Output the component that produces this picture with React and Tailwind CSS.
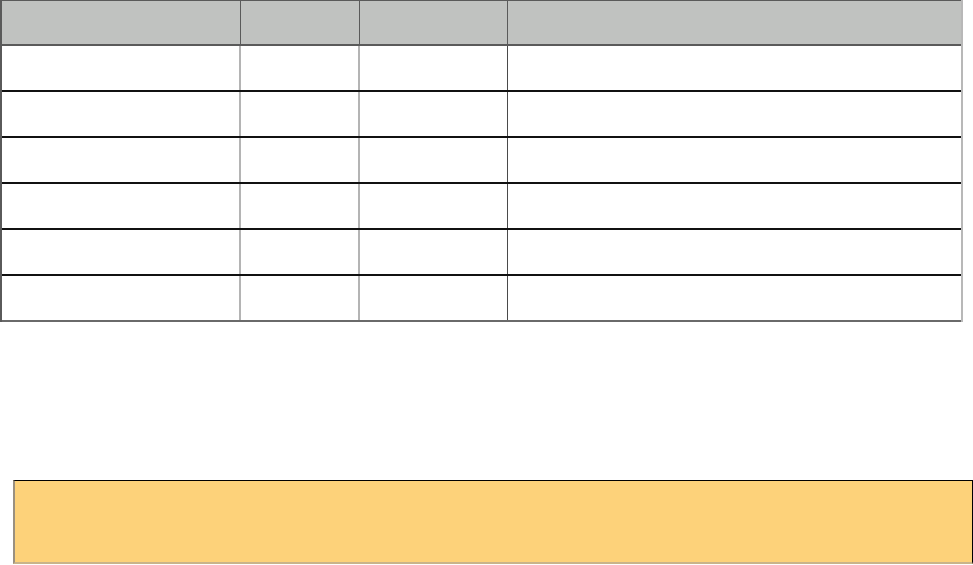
/* Empty data grid with a notice panel below */

const cols = ['w-[239px]', 'w-[119px]', 'w-[148px]', 'flex-1'];
const rows = [0, 1, 2, 3, 4, 5];

const HeaderRow = () => (
  <div className="flex h-[46px] bg-[#c0c2c0] border-t border-b-2 border-[#5a5a5a]">
    {cols.map((w, i) => (
      <div
        key={i}
        className={`${w} h-full ${i < 3 ? 'border-r border-[#5a5a5a]' : ''}`}
      />
    ))}
  </div>
);

const BodyRow = ({ last }) => (
  <div
    className={`flex h-[46px] ${last ? 'border-b-2 border-[#6a6a6a]' : 'border-b-2 border-b-[#111]'}`}
  >
    <div className="w-[239px] h-full border-r-2 border-[#b4b4b4]" />
    <div className="w-[119px] h-full border-r-2 border-[#b4b4b4]" />
    <div className="w-[148px] h-full border-r border-[#4a4a4a]" />
    <div className="flex-1 h-full" />
  </div>
);

export default function App() {
  return (
    <div className="w-[973px] h-[565px] bg-white overflow-hidden">
      <div className="w-[963px] border-l-2 border-l-[#5a5a5a] border-r-2 border-r-[#b8b8b8]">
        <HeaderRow />
        {rows.map((r) => (
          <BodyRow key={r} last={r === rows.length - 1} />
        ))}
      </div>

      <div className="mt-[158px] ml-[13px] w-[960px] h-[84px] bg-[#fdd27a] border-t border-r border-t-black border-r-black border-l-2 border-l-[#9a9080] border-b-2 border-b-[#c9b48a]" />
    </div>
  );
}
